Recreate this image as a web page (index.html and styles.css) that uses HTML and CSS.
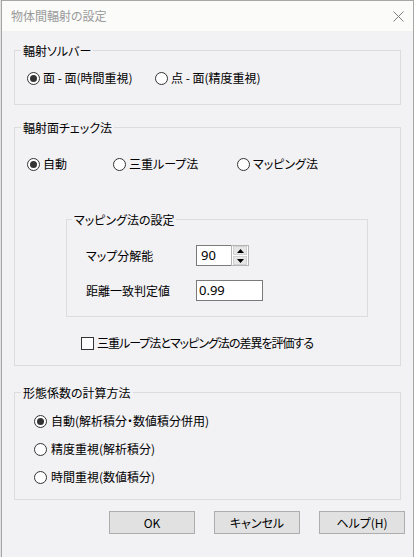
FILE: index.html
```html
<!DOCTYPE html>
<html lang="ja">
<head>
<meta charset="utf-8">
<title>物体間輻射の設定</title>
<link rel="stylesheet" href="styles.css">
</head>
<body>
<div class="window">
  <div class="titlebar">
    <span class="title">物体間輻射の設定</span>
    <svg class="close" width="11" height="11" viewBox="0 0 11 11"><path d="M0.5 0.5 L10.5 10.5 M10.5 0.5 L0.5 10.5" stroke="#7f7f7f" stroke-width="1" fill="none"/></svg>
  </div>
  <div class="content">
    <div class="group g1">
      <div class="gtitle">輻射ソルバー</div>
      <div class="radios r-solver">
        <div class="radio"><span class="rb on"></span><span>面 - 面(時間重視)</span></div>
        <div class="radio"><span class="rb"></span><span>点 - 面(精度重視)</span></div>
      </div>
    </div>
    <div class="group g2">
      <div class="gtitle">輻射面チェック法</div>
      <div class="radios r-check">
        <div class="radio"><span class="rb on"></span><span>自動</span></div>
        <div class="radio"><span class="rb"></span><span>三重ループ法</span></div>
        <div class="radio"><span class="rb"></span><span>マッピング法</span></div>
      </div>
      <div class="group inner">
        <div class="gtitle">マッピング法の設定</div>
        <div class="field f1">
          <span class="flabel">マップ分解能</span>
          <div class="spin">
            <span class="spin-val">90</span>
            <div class="spin-btns">
              <span class="sb"><svg width="7" height="4" viewBox="0 0 7 4"><path d="M3.5 0 L7 4 L0 4 Z" fill="#000"/></svg></span>
              <span class="sb"><svg width="7" height="4" viewBox="0 0 7 4"><path d="M0 0 L7 0 L3.5 4 Z" fill="#000"/></svg></span>
            </div>
          </div>
        </div>
        <div class="field f2">
          <span class="flabel">距離一致判定値</span>
          <span class="textbox">0.99</span>
        </div>
      </div>
      <div class="check"><span class="cb"></span><span class="check-text">三重ループ法とマッピング法の差異を評価する</span></div>
    </div>
    <div class="group g3">
      <div class="gtitle">形態係数の計算方法</div>
      <div class="vradios">
        <div class="radio"><span class="rb on"></span><span>自動(解析積分・数値積分併用)</span></div>
        <div class="radio"><span class="rb"></span><span>精度重視(解析積分)</span></div>
        <div class="radio"><span class="rb"></span><span>時間重視(数値積分)</span></div>
      </div>
    </div>
  </div>
  <div class="buttons">
    <button class="btn" type="button">OK</button>
    <button class="btn" type="button">キャンセル</button>
    <button class="btn" type="button">ヘルプ(H)</button>
  </div>
</div>
</body>
</html>
```

FILE: styles.css
```css
html, body {
  margin: 0;
  padding: 0;
  height: 100%;
}

body {
  background: #e2e2e2;
  font-family: "Noto Sans CJK JP", "Noto Sans", sans-serif;
  font-size: 12px;
  line-height: 16px;
  color: #000;
  font-feature-settings: "palt";
}

.window {
  margin-left: 1px;
  width: 413px;
  min-height: 100vh;
  box-sizing: border-box;
  border: 1px solid #a6a6a6;
  border-bottom: none;
  background: #f2f1f4;
}

.titlebar {
  height: 30px;
  background: #fbfcfa;
  display: flex;
  align-items: center;
  justify-content: space-between;
  padding: 0 9px 0 9px;
}

.title {
  color: #9a9a9a;
  font-size: 12px;
}

.close {
  display: block;
}

.content {
  padding: 0 12px;
}

.group {
  border: 1px solid #dcdcdc;
}

.gtitle {
  width: fit-content;
  margin: -8px 0 0 6px;
  padding: 0 2px;
  background: #f2f1f4;
}

.g1 {
  margin-top: 19px;
  padding-bottom: 18px;
}

.g2 {
  margin-top: 22px;
  padding-bottom: 14px;
}

.g3 {
  margin-top: 26px;
  padding-bottom: 14px;
}

.radios {
  display: grid;
  align-items: center;
}

.r-solver {
  margin-top: 11px;
  padding-left: 12px;
  grid-template-columns: 128px auto;
}

.r-check {
  margin-top: 20px;
  padding-left: 12px;
  grid-template-columns: 86px 124px auto;
}

.radio {
  display: flex;
  align-items: center;
  gap: 3px;
  height: 16px;
  white-space: nowrap;
}

.rb {
  width: 13px;
  height: 13px;
  box-sizing: border-box;
  border: 1px solid #333;
  border-radius: 50%;
  background: #fff;
  display: flex;
  align-items: center;
  justify-content: center;
  flex: none;
}

.rb.on::after {
  content: "";
  width: 7px;
  height: 7px;
  border-radius: 50%;
  background: #333;
}

.inner {
  margin: 47px 0 0 51px;
  width: 302px;
  box-sizing: border-box;
  padding: 0 0 15px 19px;
}

.inner .gtitle {
  margin-left: -14px;
}

.field {
  display: flex;
  align-items: center;
}

.f1 {
  margin-top: 17px;
}

.f2 {
  margin-top: 14px;
}

.flabel {
  width: 110px;
  flex: none;
}

.spin {
  display: flex;
  width: 53px;
  height: 21px;
}

.spin-val {
  width: 35px;
  box-sizing: border-box;
  border: 1px solid #7a7a7a;
  border-right: none;
  background: #fff;
  font-family: "Noto Sans", sans-serif;
  font-size: 13px;
  line-height: 19px;
  padding-left: 4px;
}

.spin-btns {
  width: 18px;
  box-sizing: border-box;
  border: 1px solid #b4b4b4;
  display: flex;
  flex-direction: column;
  gap: 1px;
  background: #fff;
}

.sb {
  flex: 1;
  background: #e6e6e6;
  border: 1px solid #d2d2d2;
  display: flex;
  align-items: center;
  justify-content: center;
  margin: 0 1px;
}

.sb svg {
  display: block;
}

.textbox {
  width: 67px;
  height: 21px;
  box-sizing: border-box;
  border: 1px solid #7a7a7a;
  background: #fff;
  font-family: "Noto Sans", sans-serif;
  font-size: 13px;
  line-height: 19px;
  padding-left: 2px;
}

.check {
  display: flex;
  align-items: center;
  gap: 3px;
  margin-top: 18px;
  padding-left: 66px;
  height: 16px;
}

.check-text {
  letter-spacing: -1px;
}

.cb {
  width: 13px;
  height: 13px;
  box-sizing: border-box;
  border: 1px solid #333;
  background: #fff;
  flex: none;
}

.vradios {
  display: flex;
  flex-direction: column;
  gap: 12px;
  margin-top: 12px;
  padding-left: 19px;
}

.vradios .radio {
  gap: 4px;
}

.buttons {
  display: flex;
  justify-content: flex-end;
  gap: 19px;
  margin-top: 11px;
  padding-right: 8px;
}

.btn {
  width: 86px;
  height: 23px;
  box-sizing: border-box;
  border: 1px solid #adadad;
  background: #e1e1e1;
  font-family: "Noto Sans CJK JP", "Noto Sans", sans-serif;
  font-feature-settings: "palt";
  font-size: 12px;
  line-height: 16px;
  color: #000;
  padding: 0;
  border-radius: 0;
}
```
